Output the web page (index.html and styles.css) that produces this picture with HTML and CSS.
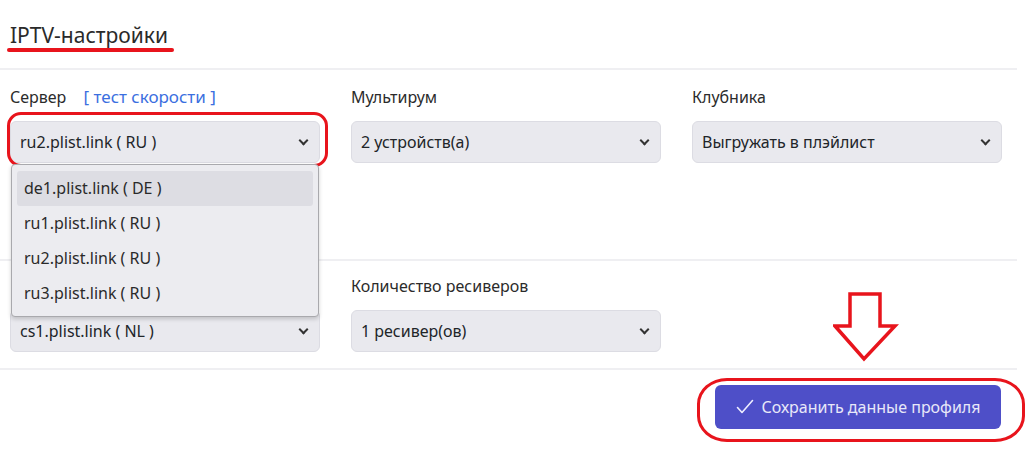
FILE: index.html
```html
<!DOCTYPE html>
<html lang="ru">
<head>
<meta charset="utf-8">
<link rel="stylesheet" href="styles.css">
</head>
<body>
<div class="page">
  <div class="head">
    <h2 class="title">IPTV-настройки</h2>
    <span class="title-mark"></span>
  </div>

  <div class="row row-first">
    <div class="field field-server">
      <div class="label">Сервер <a class="speed">[ тест скорости ]</a></div>
      <div class="select"><span>ru2.plist.link ( RU )</span><i class="chev"></i></div>
      <span class="mark-select"></span>
      <ul class="dropdown">
        <li class="hl">de1.plist.link ( DE )</li>
        <li>ru1.plist.link ( RU )</li>
        <li>ru2.plist.link ( RU )</li>
        <li>ru3.plist.link ( RU )</li>
      </ul>
    </div>
    <div class="field">
      <div class="label">Мультирум</div>
      <div class="select"><span>2 устройств(а)</span><i class="chev"></i></div>
    </div>
    <div class="field">
      <div class="label">Клубника</div>
      <div class="select"><span>Выгружать в плэйлист</span><i class="chev"></i></div>
    </div>
  </div>

  <div class="row row-second">
    <div class="field">
      <div class="label">&nbsp;</div>
      <div class="select"><span>cs1.plist.link ( NL )</span><i class="chev"></i></div>
    </div>
    <div class="field">
      <div class="label">Количество ресиверов</div>
      <div class="select"><span>1 ресивер(ов)</span><i class="chev"></i></div>
    </div>
    <div class="field field-arrow">
      <svg class="arrow" width="66" height="72" viewBox="0 0 66 72">
        <polygon points="17,2 47,2 47,34 62,34 31,67 2,34 17,34" fill="none" stroke="#e8141c" stroke-width="3.5" stroke-linejoin="miter"/>
      </svg>
    </div>
  </div>

  <div class="actions">
    <button class="save">
      <svg class="check" width="18" height="16" viewBox="0 0 18 16"><polyline points="1.5,8.5 6,13.5 16.5,1.5" fill="none" stroke="#eef" stroke-width="1.6" stroke-linecap="round" stroke-linejoin="round"/></svg>
      Сохранить данные профиля
    </button>
    <span class="mark-btn"></span>
  </div>
</div>
</body>
</html>
```

FILE: styles.css
```css
* { box-sizing: border-box; }
html, body { margin: 0; padding: 0; background: #fff; }
body {
  font-family: "Noto Sans", "Open Sans", sans-serif;
  color: #212529;
  width: 1035px;
  height: 452px;
  overflow: hidden;
}
.page {
  width: 1017px;
}
.head {
  position: relative;
  height: 70px;
  border-bottom: 2px solid #efeff2;
  padding: 20px 0 0 10px;
}
.title {
  margin: 0;
  font-size: 21px;
  font-weight: 400;
  line-height: 30px;
  color: #2a2a2a;
}
.title-mark {
  position: absolute;
  left: 7px;
  top: 48px;
  width: 167px;
  height: 4px;
  border-radius: 2px;
  background: #e8141c;
}
.row {
  display: grid;
  grid-template-columns: 310px 310px 310px;
  column-gap: 31px;
  padding: 16px 0 0 10px;
  border-bottom: 2px solid #efeff2;
}
.row-first { height: 191px; }
.row-second { height: 109px; padding-top: 14px; }
.field { position: relative; }
.label {
  font-size: 16px;
  line-height: 22px;
  color: #2b2b2b;
  margin-bottom: 13px;
}
.speed {
  color: #3b6fe0;
  margin-left: 13px;
  font-size: 17px;
}
.select {
  height: 42px;
  border: 1px solid #dcdce3;
  border-radius: 6px;
  background: #e9e9ee;
  display: flex;
  align-items: center;
  justify-content: space-between;
  padding: 0 12px 0 9px;
  font-size: 16px;
  color: #212529;
}
.chev {
  width: 7px;
  height: 7px;
  border-right: 2px solid #333;
  border-bottom: 2px solid #333;
  transform: rotate(45deg);
  margin-top: -4px;
}
.mark-select {
  position: absolute;
  left: -3px;
  top: 26px;
  width: 321px;
  height: 55px;
  border: 3.5px solid #e8141c;
  border-radius: 14px;
}
.dropdown {
  position: absolute;
  z-index: 5;
  left: 1px;
  top: 78px;
  width: 308px;
  height: 153px;
  margin: 0;
  padding: 6px 5px;
  list-style: none;
  background: #ececf0;
  border: 1px solid #a9a9ad;
  border-radius: 4px;
  box-shadow: 0 2px 4px rgba(0,0,0,0.18);
  font-size: 16px;
}
.dropdown li {
  height: 35px;
  line-height: 35px;
  padding-left: 7px;
  color: #2a2a2a;
}
.dropdown li.hl {
  background: #dddde3;
  border-radius: 3px;
}
.field-arrow { position: relative; }
.arrow {
  position: absolute;
  left: 141px;
  top: 17px;
}
.actions {
  position: relative;
  display: flex;
  justify-content: flex-end;
  padding: 15px 16px 0 0;
}
.save {
  height: 44px;
  width: 286px;
  border: none;
  border-radius: 6px;
  background: #4e4fc8;
  color: #e8e8f8;
  font-family: inherit;
  font-size: 16px;
  display: flex;
  align-items: center;
  justify-content: center;
  gap: 8px;
  padding: 0;
}
.check { margin-top: -1px; }
.mark-btn {
  position: absolute;
  left: 697px;
  top: 8px;
  width: 328px;
  height: 64px;
  border: 3.5px solid #e8141c;
  border-radius: 30px / 26px;
}
```
